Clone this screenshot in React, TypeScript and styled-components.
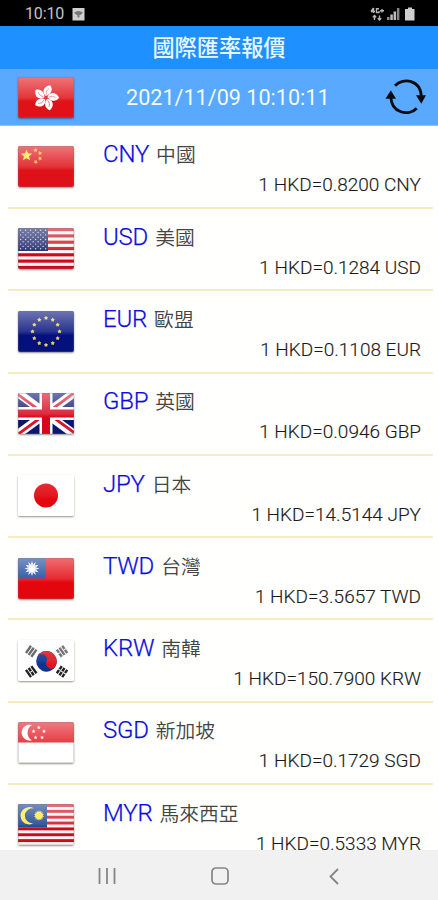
import React from "react";
import styled, { createGlobalStyle } from "styled-components";

const GlobalStyle = createGlobalStyle`
  * { box-sizing: border-box; }
  html, body { margin: 0; padding: 0; background: #fffffd; }
  body { font-family: Roboto, "Noto Sans CJK TC", sans-serif; overflow: hidden; }
`;

const Screen = styled.div`
  display: flex;
  flex-direction: column;
  width: 438px;
  height: 900px;
  overflow: hidden;
  background: #fffffd;
`;

const StatusBar = styled.div`
  flex: none;
  display: flex;
  align-items: center;
  height: 26px;
  padding: 2px 21px 0 25px;
  background: #000;
  color: #c4c4c4;
`;

const Clock = styled.span`
  width: 47px;
  font-size: 16px;
  line-height: 24px;
  letter-spacing: -0.15px;
`;

const StatusIcons = styled.div`
  display: flex;
  align-items: center;
  gap: 3px;
  margin-left: auto;
`;

const TitleBar = styled.header`
  flex: none;
  height: 43px;
  background: #1e90ff;
  color: #e6f6ff;
  text-align: center;
  font-size: 22.2px;
  line-height: 45px;
  font-weight: 500;
`;

const BaseBar = styled.div`
  flex: none;
  display: flex;
  align-items: center;
  height: 57px;
  padding: 0 11px 0 18px;
  background: #58a9ff;
  border-bottom: 1px solid #8cc6ff;
`;

const Timestamp = styled.div`
  flex: 1;
  padding: 2px 0 0 52px;
  color: #f2faff;
  font-size: 21.6px;
  line-height: 30px;
  white-space: nowrap;
`;

const List = styled.main`
  flex: 1;
  min-height: 0;
  overflow: hidden;
  padding-top: 0.7px;
`;

const Row = styled.div`
  display: flex;
  height: 82.3px;
  margin: 0 5px 0 8px;
  padding: 19.4px 0 0 10px;
  border-bottom: 2px solid #f8ebc0;
`;

const RowBody = styled.div`
  flex: 1;
  display: flex;
  flex-direction: column;
  padding-right: 12px;
  margin: -7.7px 0 0 29px;
`;

const Name = styled.div`
  display: flex;
  align-items: baseline;
  height: 32px;
  line-height: 32px;
  white-space: nowrap;
`;

const Code = styled.span`
  color: #0c0ce0;
  font-size: 24px;
  font-weight: 300;
  letter-spacing: -0.2px;
  margin-right: 7px;
  -webkit-text-stroke: 0.25px #0c0ce0;
`;

const Region = styled.span`
  color: #444;
  font-size: 19.8px;
  font-weight: 350;
`;

const Rate = styled.div`
  align-self: flex-end;
  height: 30px;
  color: #1a1a1a;
  font-size: 19px;
  font-weight: 300;
  line-height: 30px;
  white-space: nowrap;
  -webkit-text-stroke: 0.15px #1a1a1a;
`;

const FlagSvg = styled.svg`
  flex: none;
  display: block;
  width: 56px;
  height: 41px;
  border-radius: 2px;
  box-shadow: 0 1px 2px rgba(40, 40, 40, 0.5);
`;

const NavBar = styled.nav`
  flex: none;
  height: 50px;
  display: grid;
  grid-template-columns: 1fr 1fr 1fr;
  align-items: center;
  justify-items: center;
  padding: 2px 47px 0 50px;
  background: #f1f1f1;
`;

const starPoints = (cx: number, cy: number, r: number, n = 5, inner = 0.4, rot = 0) =>
  Array.from({ length: n * 2 }, (_, i) => {
    const a = rot - Math.PI / 2 + (i * Math.PI) / n;
    const q = i % 2 ? r * inner : r;
    return `${(cx + q * Math.cos(a)).toFixed(2)},${(cy + q * Math.sin(a)).toFixed(2)}`;
  }).join(" ");

const Stripes = ({ count }: { count: number }) => (
  <>
    <rect width="56" height="41" fill="#fdf6f6" />
    {Array.from({ length: Math.ceil(count / 2) }, (_, i) => (
      <rect key={i} y={(i * 2 * 41) / count} width="56" height={41 / count} fill="#cc0a18" />
    ))}
  </>
);

const Trigram = ({ x, y, angle, color, broken }: { x: number; y: number; angle: number; color: string; broken: number[] }) => (
  <g transform={`translate(${x} ${y}) rotate(${angle})`} fill={color}>
    {[-3.3, 0, 3.3].map((dy, i) => (
      <g key={i}>
        <rect x="-4.4" y={dy - 1.2} width="8.8" height="2.4" />
        {broken.includes(i) && <rect x="-0.5" y={dy - 1.3} width="1" height="2.6" fill="#fff" />}
      </g>
    ))}
  </g>
);

const art: Record<string, React.ReactNode> = {
  HKD: (
    <>
      <rect width="56" height="41" fill="#e01218" />
      <g transform="translate(28 20.700)" fill="#fff">
        {[12, 84, 156, 228, 300].map((a) => (
          <g key={a} transform={`rotate(${a})`}>
            <path d="M-.6-1.500C-5.500-4.500-5-11 1.500-13C5.800-9.500 4.200-4-.6-1.500Z" />
            <path d="M-.3-3C-1.500-6-.5-8 1-9.500" fill="none" stroke="#e8595b" strokeWidth=".7" />
          </g>
        ))}
      </g>
    </>
  ),
  CNY: (
    <>
      <rect width="56" height="41" fill="#de1018" />
      <polygon points={starPoints(8.5, 9.500, 6, 5, 0.45)} fill="#ffe13a" />
      {[[17.500, 4.2], [22, 7.200], [22, 12.5], [17.8, 16]].map(([x, y], i) => (
        <polygon key={i} points={starPoints(x, y, 2.3, 5, 0.5, i)} fill="#f5b52b" />
      ))}
    </>
  ),
  USD: (
    <>
      <Stripes count={13} />
      <rect width="30" height="23" fill="#1c2268" />
      {Array.from({ length: 9 }, (_, r) =>
        Array.from({ length: r % 2 ? 5 : 6 }, (_, c) => (
          <circle key={`${r}-${c}`} cx={2.600 + c * 5 + (r % 2 ? 2.5 : 0)} cy={2.300 + r * 2.3} r=".68" fill="#ccd2ea" />
        ))
      )}
    </>
  ),
  EUR: (
    <>
      <rect width="56" height="41" fill="#04107c" />
      {Array.from({ length: 12 }, (_, i) => (
        <polygon
          key={i}
          points={starPoints(28 + 13.5 * Math.sin((i * Math.PI) / 6), 20.5 - 13.5 * Math.cos((i * Math.PI) / 6), 2.2, 5, 0.6)}
          fill="#e6cf4c"
        />
      ))}
    </>
  ),
  GBP: (
    <>
      <rect width="56" height="41" fill="#0a1670" />
      <path d="M0 0L56 41M56 0L0 41" stroke="#fff" strokeWidth="8.5" />
      <path d="M-1 .8L27 21.300M29 19.800L57 40.300M57-.8L29 19.800M27 21.500L-1 42" stroke="#d9142c" strokeWidth="2.8" />
      <path d="M28 0V41M0 20.500H56" stroke="#fff" strokeWidth="13" />
      <path d="M28 0V41M0 20.500H56" stroke="#d9061c" strokeWidth="8" />
    </>
  ),
  JPY: (
    <>
      <rect width="56" height="41" fill="#fff" />
      <circle cx="28" cy="20.500" r="12" fill="#e2040e" />
    </>
  ),
  TWD: (
    <>
      <rect width="56" height="41" fill="#e3060d" />
      <rect width="28" height="20.500" fill="#15439b" />
      <polygon points={starPoints(14, 10.500, 7.5, 12, 0.55)} fill="#fff" />
      <circle cx="14" cy="10.500" r="4" fill="#fff" stroke="#8ea6d2" strokeWidth=".6" />
    </>
  ),
  KRW: (
    <>
      <rect width="56" height="41" fill="#fff" />
      <g transform="translate(28.500 21.300) rotate(25)">
        <circle r="10.300" fill="#0c3390" />
        <path d="M-10.300 0A10.300 10.300 0 0 1 10.300 0A5.150 5.150 0 0 1 0 0A5.150 5.150 0 0 0-10.300 0Z" fill="#df141e" />
      </g>
      <Trigram x={13.2} y={11.3} angle={-55} color="#555" broken={[]} />
      <Trigram x={44} y={11.3} angle={55} color="#606060" broken={[0, 2]} />
      <Trigram x={13.2} y={31.6} angle={55} color="#222" broken={[1]} />
      <Trigram x={44} y={31.6} angle={-55} color="#222" broken={[0, 1, 2]} />
    </>
  ),
  SGD: (
    <>
      <rect width="56" height="41" fill="#fff" />
      <rect width="56" height="20.500" fill="#e21c24" />
      <path d="M14 3A8 8 0 1 0 14 18.300A8.800 8.800 0 0 1 14 3Z" fill="#fff" />
      {Array.from({ length: 5 }, (_, i) => (
        <polygon
          key={i}
          points={starPoints(20.8 + 5.5 * Math.sin((i * 2 * Math.PI) / 5), 11 - 5.5 * Math.cos((i * 2 * Math.PI) / 5), 2, 5, 0.5)}
          fill="#fff"
        />
      ))}
    </>
  ),
  MYR: (
    <>
      <Stripes count={14} />
      <rect width="29" height="23.500" fill="#123c8d" />
      <path d="M16 4.500A8.700 8.700 0 1 0 16 19A7.450 7.450 0 1 1 16 4.500Z" fill="#ffe93b" />
      <polygon points={starPoints(21, 11.500, 5.2, 14, 0.7)} fill="#ffe93b" />
    </>
  ),
};

const Flag = ({ code }: { code: string }) => {
  const pale = code === "JPY" || code === "KRW";
  return (
    <FlagSvg viewBox="0 0 56 41" preserveAspectRatio="none">
      <defs>
        <linearGradient id={`gloss-${code}`} x1="0" y1="0" x2="0" y2="1">
          <stop offset="0" stopColor="#fff" stopOpacity=".42" />
          <stop offset=".5" stopColor="#fff" stopOpacity=".15" />
          <stop offset=".6" stopColor="#fff" stopOpacity="0" />
        </linearGradient>
      </defs>
      {art[code]}
      <rect width="56" height="41" fill={`url(#gloss-${code})`} opacity={pale ? 0.5 : 1} />
      {!pale && <rect x=".5" y=".5" width="55" height="40" rx="1.500" fill="none" stroke="#777" strokeOpacity=".25" />}
    </FlagSvg>
  );
};

const RefreshIcon = () => (
  <svg width="42" height="40" viewBox="0 0 42 40" fill="none">
    <path d="M10 8.800C18 .2 36 2.500 36.300 20" stroke="#080c10" strokeWidth="2.800" />
    <path d="M31.700 31.200C24 39.800 5.800 36 5.900 19.500" stroke="#080c10" strokeWidth="2.800" />
    <path d="M31 18.300H41L36.300 26.700ZM.5 21.800H11L5.800 13.200Z" fill="#080c10" />
  </svg>
);

const PictureIcon = () => (
  <svg width="13" height="13" viewBox="0 0 13 13">
    <rect x=".5" y="0" width="12" height="12.500" fill="#cfcfcf" />
    <path d="M2 4.500Q6.500 1.300 11 4.500L8.500 7H7.500V9.500H5.500V7H4.500Z" fill="#777" />
  </svg>
);

const DataIcon = () => (
  <svg width="14" height="15" viewBox="0 0 14 15" fill="none" stroke="#b4b4b4" strokeWidth="1.400">
    <path d="M3.500 1V6M1 4.500H5M3.500 1L1 4.500M9 1.700H6.500V5.500H9V4M10 3.800H14M12 2V5.500" />
    <path d="M4.500 13V8.500M2.800 10.300L4.500 8.500L6.200 10.300M9.500 8.500V13M7.800 11.200L9.500 13L11.200 11.200" />
  </svg>
);

const SignalIcon = () => (
  <svg width="13" height="14" viewBox="0 0 13 14" fill="#bdbdbd">
    <rect x="0" y="10" width="2.500" height="3" fill="#8e8e8e" />
    <rect x="3.300" y="7.500" width="2.500" height="5.500" />
    <rect x="6.600" y="4.500" width="2.500" height="8.500" />
    <rect x="9.900" y="1" width="2.500" height="12" fill="#858585" />
  </svg>
);

const BatteryIcon = () => (
  <svg width="14" height="14" viewBox="0 0 14 14" fill="#cfcfcf">
    <path d="M5 .5H9V2H11.500V13.500H2V2H5Z" />
  </svg>
);

const rates = [
  ["CNY", "中國", "0.8200"],
  ["USD", "美國", "0.1284"],
  ["EUR", "歐盟", "0.1108"],
  ["GBP", "英國", "0.0946"],
  ["JPY", "日本", "14.5144"],
  ["TWD", "台灣", "3.5657"],
  ["KRW", "南韓", "150.7900"],
  ["SGD", "新加坡", "0.1729"],
  ["MYR", "馬來西亞", "0.5333"],
];

export default function App() {
  return (
    <Screen>
      <GlobalStyle />
      <StatusBar>
        <Clock>10:10</Clock>
        <PictureIcon />
        <StatusIcons>
          <DataIcon />
          <SignalIcon />
          <BatteryIcon />
        </StatusIcons>
      </StatusBar>
      <TitleBar>國際匯率報價</TitleBar>
      <BaseBar>
        <Flag code="HKD" />
        <Timestamp>2021/11/09 10:10:11</Timestamp>
        <RefreshIcon />
      </BaseBar>
      <List>
        {rates.map(([code, region, rate]) => (
          <Row key={code}>
            <Flag code={code} />
            <RowBody>
              <Name>
                <Code>{code}</Code>
                <Region>{region}</Region>
              </Name>
              <Rate>{`1 HKD=${rate} ${code}`}</Rate>
            </RowBody>
          </Row>
        ))}
      </List>
      <NavBar>
        <svg width="18" height="18" viewBox="0 0 18 18" stroke="#858585" strokeWidth="1.800">
          <path d="M1.500 1V17M9 1V17M16.500 1V17" />
        </svg>
        <svg width="18" height="18" viewBox="0 0 18 18" fill="none" stroke="#858585" strokeWidth="1.700">
          <rect x="1" y="1" width="16" height="16" rx="4" />
        </svg>
        <svg width="10" height="17" viewBox="0 0 10 17" fill="none" stroke="#858585" strokeWidth="1.800">
          <path d="M9 1L1.500 8.500L9 16" />
        </svg>
      </NavBar>
    </Screen>
  );
}
